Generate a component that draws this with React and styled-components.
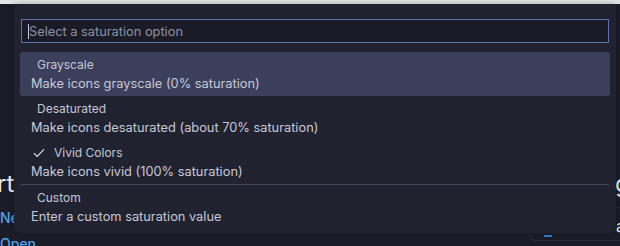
import React from 'react'
import styled, { createGlobalStyle } from 'styled-components'

const GlobalStyle = createGlobalStyle`
  html, body {
    margin: 0;
    padding: 0;
    background: #1b1c27;
    overflow: hidden;
  }
  body {
    font-family: Inter, "Liberation Sans", sans-serif;
  }
`

const Page = styled.div`
  position: relative;
  width: 620px;
  height: 246px;
  overflow: hidden;
  background: #1b1c27;
`

const TopStrip = styled.div`
  height: 4px;
  background: #e6e6e8;
`

const Behind = styled.div`
  display: flex;
  justify-content: space-between;
  padding-top: 165px;
`

const LeftCol = styled.div`
  display: flex;
  flex-direction: column;
  margin-left: -3px;
`

const RightCol = styled.div`
  display: flex;
  flex-direction: column;
  width: 100px;
  margin-right: -10px;
`

const Heading = styled.div`
  font-size: 24px;
  color: #eceef4;
  line-height: 30px;
  padding-left: ${p => p.$indent || 0}px;
`

const LinkText = styled.div`
  font-size: 14px;
  font-weight: 500;
  color: #4fa3e8;
  line-height: 17px;
  padding-left: 3px;
  margin-top: ${p => p.$top || 0}px;
`

const Card = styled.div`
  height: 34px;
  margin-top: 8px;
  border: 1px solid #2a2b39;
  border-radius: 6px;
  position: relative;
  font-size: 16px;
  line-height: 18px;
  color: #eceef4;
  padding: 9px 0 0 85px;
  box-sizing: border-box;
`

const Marker = styled.span`
  position: absolute;
  left: 13px;
  bottom: 3px;
  width: 8px;
  height: 2px;
  background: #2f7fd0;
`

const Widget = styled.div`
  position: absolute;
  left: 14px;
  top: 4px;
  width: 602px;
  height: 229px;
  background: #212230;
  border-radius: 0 0 6px 6px;
  box-shadow: 0 0 6px rgba(0, 0, 0, 0.3);
  padding: 15px 6px 0 6px;
  box-sizing: border-box;
`

const Input = styled.div`
  margin: 0 1px;
  height: 24px;
  box-sizing: border-box;
  border: 1px solid #5d72ad;
  background: #1a1b27;
  display: flex;
  align-items: center;
  padding-left: 6px;
  font-size: 12.8px;
  color: #8d91a4;
`

const Caret = styled.span`
  width: 1px;
  height: 15px;
  background: #c8cad8;
`

const List = styled.div`
  margin-top: 9px;
  display: flex;
  flex-direction: column;
`

const Row = styled.div`
  height: 44px;
  box-sizing: border-box;
  border-radius: 3px;
  background: ${p => (p.$active ? '#3c3f5b' : 'transparent')};
  border-top: ${p => (p.$separator ? '1px solid #45475a' : 'none')};
  padding: 6px 11px 0 11px;
  display: flex;
  flex-direction: column;
`

const Label = styled.div`
  display: flex;
  align-items: center;
  font-size: 12px;
  line-height: 14px;
  color: #c3c6d6;
  padding-left: ${p => (p.$check ? 2 : 6)}px;
  gap: 9px;
`

const Desc = styled.div`
  font-size: 12.8px;
  line-height: 17px;
  margin-top: 3px;
  color: #c6c8d6;
`

const Check = () => (
  <svg width="12" height="10" viewBox="0 0 12 10" fill="none">
    <path d="M1 5.2 L4.2 8.4 L11 1.4" stroke="#d6d8e2" strokeWidth="1.3" />
  </svg>
)

const options = [
  { label: 'Grayscale', desc: 'Make icons grayscale (0% saturation)', active: true },
  { label: 'Desaturated', desc: 'Make icons desaturated (about 70% saturation)' },
  { label: 'Vivid Colors', desc: 'Make icons vivid (100% saturation)', checked: true },
  { label: 'Custom', desc: 'Enter a custom saturation value', separator: true },
]

export default function App() {
  return (
    <Page>
      <GlobalStyle />
      <TopStrip />
      <Behind>
        <LeftCol>
          <Heading>rt</Heading>
          <LinkText $top={10}>Ne</LinkText>
          <LinkText $top={9}>Open</LinkText>
        </LeftCol>
        <RightCol>
          <Heading $indent={85}>g</Heading>
          <Card>
            a
            <Marker />
          </Card>
        </RightCol>
      </Behind>
      <Widget>
        <Input>
          <Caret />
          Select a saturation option
        </Input>
        <List>
          {options.map(o => (
            <Row key={o.label} $active={o.active} $separator={o.separator}>
              <Label $check={o.checked}>
                {o.checked && <Check />}
                {o.label}
              </Label>
              <Desc>{o.desc}</Desc>
            </Row>
          ))}
        </List>
      </Widget>
    </Page>
  )
}
